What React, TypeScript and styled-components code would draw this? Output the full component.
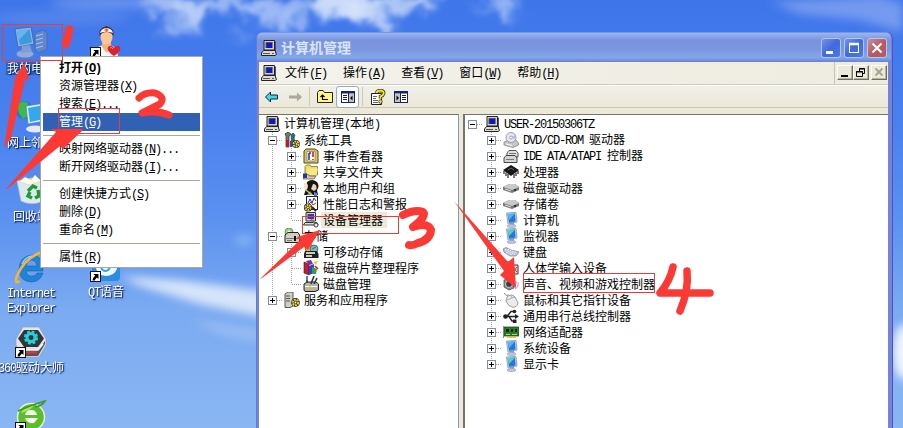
import React from "react";
import styled, { createGlobalStyle, css } from "styled-components";

const GlobalStyle = createGlobalStyle`
  * { box-sizing: border-box; }
  body { margin: 0; overflow: hidden; }
`;

const Desktop = styled.main`
  position: relative;
  width: 903px;
  height: 428px;
  overflow: hidden;
  background: linear-gradient(#3e76ea 0%, #4a80ee 28%, #5a90f0 50%, #7aaaf1 72%, #8ab6f3 100%);
  font-family: "Noto Sans CJK SC", sans-serif;
  font-size: 12px;
  line-height: 16px;
  color: #000;
`;

const SkyLayer = styled.svg`
  position: absolute;
  inset: 0;
`;

const Latin = styled.span`
  font-family: "Liberation Mono", monospace;
  font-size: 12px;
  letter-spacing: -1.2px;
  white-space: pre;
`;

const Key = styled.span`
  text-decoration: underline;
  text-decoration-thickness: 1px;
  text-underline-offset: 1px;
`;

/* Sets Latin runs in a half-width face; "&" marks the access key. */
function Label({ text }: { text: string }) {
  const runs = text.match(/[\x0a\x20-\x7e]+|[^\x0a\x20-\x7e]+/g) ?? [];
  return (
    <>
      {runs.map((run, i) => {
        if (!/^[\x20-\x7e]/.test(run)) return <React.Fragment key={i}>{run}</React.Fragment>;
        const at = run.indexOf("&");
        if (at < 0) return <Latin key={i}>{run}</Latin>;
        return (
          <Latin key={i}>
            {run.slice(0, at)}
            <Key>{run[at + 1]}</Key>
            {run.slice(at + 2)}
          </Latin>
        );
      })}
    </>
  );
}

/* ---------- desktop shortcuts ---------- */

const Shortcut = styled.div<{ $x: number; $y: number; $w?: number }>`
  position: absolute;
  left: ${(p) => p.$x}px;
  top: ${(p) => p.$y}px;
  width: ${(p) => p.$w ?? 76}px;
  display: flex;
  flex-direction: column;
  align-items: center;
  gap: 3px;
`;

const Caption = styled.div<{ $selected?: boolean }>`
  color: #fff;
  line-height: 12.5px;
  padding: 0 1px;
  text-align: center;
  white-space: pre;
  text-shadow: 1px 1px 1px rgba(10, 30, 80, 0.9), 1px 1px 2px rgba(10, 30, 80, 0.6);
  ${(p) => p.$selected && css`background: #2f62b8;`}
`;

const Big = styled.svg.attrs({ viewBox: "0 0 32 32", width: 32, height: 32 })`
  display: block;
  overflow: visible;
`;

const ArrowBadge = () => (
  <g>
    <rect x="0.5" y="21.5" width="10" height="10" fill="#fff" stroke="#111" />
    <path d="M3.5 24H8.5V29L6.9 27.4Q5.2 28.6 4.8 30.5H2.5Q2.6 27.4 5.2 25.7Z" fill="#000" />
  </g>
);

const ComputerBig = () => (
  <Big>
    <path d="M20 6L28 3L32 6V22L24 26L20 23Z" fill="#5f88cc" stroke="#4267b0" strokeWidth=".7" />
    <path d="M21 9L28 7M21 13L28 11M21 17L28 15M21 21L28 19" stroke="#a5c0ea" strokeWidth="1.3" />
    <path d="M0 2L16 0L19 17L3 20Z" fill="#8fb4e6" stroke="#3862a8" strokeWidth=".8" />
    <path d="M2 4L14.500 2L17 15.500L5 18Z" fill="#3d9ade" />
    <path d="M2 4L14.500 2L4 13Z" fill="#66b6ea" />
    <ellipse cx="10" cy="27" rx="9" ry="4" fill="#8fabdc" stroke="#5b7ab5" strokeWidth=".8" />
    <path d="M7 19L15 18L17 25L6 26Z" fill="#7f9dd4" />
  </Big>
);
const DoctorBig = () => (
  <Big>
    <path d="M5 32Q4 20 14 19H19Q28 20 28 32Z" fill="#f3f6fb" />
    <path d="M12 16H21V21L16.500 27L12 21Z" fill="#f5b47e" />
    <ellipse cx="16.500" cy="11" rx="6" ry="7.500" fill="#fbc794" />
    <path d="M9.500 10Q8 2 16.500 0Q25 2 23.500 10Q21 6 16.500 6Q12 6 9.500 10Z" fill="#3a3438" />
    <path d="M10 7Q11 2.500 16.500 2Q22 2.500 23 7Q16.500 4.500 10 7Z" fill="#fff" />
    <path d="M14.500 4H18.500M16.500 2.300V6" stroke="#e85b35" strokeWidth="1.5" />
    <path d="M24 30Q16 25 18 21Q21 18 24 22Q27 18 30 21Q32 25 24 30Z" fill="#e0202c" />
    <path d="M20 22Q21.500 20.500 23 23" stroke="#ff8a80" fill="none" />
    <ArrowBadge />
  </Big>
);
const NetworkBig = () => (
  <Big>
    <circle cx="9" cy="9" r="9" fill="#2c72d8" />
    <path d="M2 4Q8 -2 13 2L11 8L15 14L8 18L4 12Z" fill="#3fb94a" />
    <path d="M11 5L30 2V20L13 23Z" fill="#d8ebfb" stroke="#4c7ec0" strokeWidth=".7" />
    <path d="M13 7L29 4V18L15 21Z" fill="#35a8ec" />
    <ellipse cx="20" cy="28" rx="9" ry="3.500" fill="#e4e9f2" />
  </Big>
);
const RecycleBig = () => (
  <Big>
    <path d="M2 6L16 3L30 5L26 27Q16 31 6 26Z" fill="#dde9f2" stroke="#a9bccc" strokeWidth=".7" />
    <path d="M4 7L10 2L16 5L20 0L26 6L15 10Z" fill="#fffdf0" stroke="#d8c67e" strokeWidth=".5" />
    <path d="M13 16L18 11L22 13M23 15L24 21L20 23M17 23L13 21L15 17" fill="none" stroke="#1e9c2e" strokeWidth="3.4" />
  </Big>
);
const ExplorerBig = () => (
  <Big>
    <path
      fillRule="evenodd"
      d="M28 20H11Q12 26 18 25Q21 25 22 22H28Q25 31 16 31Q4 30 4 18Q5 5 17 4Q29 5 28 20ZM11 15H22Q21 9 16.500 9Q12 10 11 15Z"
      fill="#1f83d6"
      stroke="#1561b0"
      strokeWidth=".6"
    />
    <path d="M5 30Q-1 34 2 25Q8 10 22 3Q32 -2 29 7" fill="none" stroke="#f4b43a" strokeWidth="2.600" />
    <path d="M7 13Q10 6 17 5" stroke="#8fd1fb" strokeWidth="1.500" fill="none" />
  </Big>
);
const QtBig = () => (
  <Big>
    <rect x="2" y="2" width="28" height="29" rx="4" fill="#2a8de0" />
    <path d="M6 9H27V19Q24 26 16 26Q7 25 6 18Z" fill="#eef8ff" />
    <path d="M11 17Q12 21 16 21Q20 20 20 15" stroke="#39a2ea" strokeWidth="2" fill="none" />
    <ArrowBadge />
  </Big>
);
const DriverBig = () => (
  <Big>
    <path d="M8 1H24L31 13V19L24 31H8L1 19V13Z" fill="#e2e4e7" stroke="#9aa0a8" strokeWidth=".7" />
    <path d="M8 24H24L30 15V18L23 30H9L4 21Z" fill="#50545a" />
    <path d="M10 26.500H22" stroke="#d8343c" strokeWidth="2.500" />
    <path d="M5 21L9 24H23L28 18" stroke="#f2f2f2" strokeWidth="1.500" fill="none" />
    <path d="M9 4H23L29 12.500L23 21H9L3 12.500Z" fill="#31363c" />
    <circle cx="16" cy="11.500" r="5.600" fill="none" stroke="#22d2d8" strokeWidth="3" strokeDasharray="2.600 1.800" />
    <circle cx="16" cy="11.500" r="4" fill="none" stroke="#22d2d8" strokeWidth="3" />
    <ArrowBadge />
  </Big>
);
const GreenBig = () => (
  <Big>
    <circle cx="16" cy="16" r="13.500" fill="#5cbe2c" stroke="#e5f8d4" strokeWidth="1.400" />
    <path d="M6 12Q10 4 19 4Q15 10 6 12Z" fill="#a9e36b" />
    <path d="M10 14Q11 9 16 9Q21 9 22 14ZM10 17H23L19 22Q12 23 10 17Z" fill="#f5ffea" />
    <path d="M3 10Q16 4 30 0Q27 5 20 6" fill="none" stroke="#3c9a1c" strokeWidth="1.600" />
    <ArrowBadge />
  </Big>
);

/* ---------- context menu ---------- */

const ContextMenu = styled.div`
  position: absolute;
  left: 40px;
  top: 56px;
  width: 163px;
  height: 212px;
  padding: 2px;
  border: 1px solid #aca899;
  background: #fff;
  display: flex;
  flex-direction: column;
`;
const MenuItem = styled.div<{ $active?: boolean; $bold?: boolean }>`
  height: 18px;
  line-height: 16px;
  padding-left: 16px;
  white-space: nowrap;
  flex: none;
  font-weight: ${(p) => (p.$bold ? 700 : 400)};
  ${(p) => p.$active && css`background: #3161b5; color: #fff;`}
`;
const MenuRule = styled.hr`
  flex: none;
  width: 157px;
  height: 1px;
  margin: 4px 0;
  border: 0;
  background: #aca899;
`;

/* ---------- window ---------- */

const Window = styled.section`
  position: absolute;
  left: 256px;
  top: 32px;
  width: 637px;
  height: 410px;
  display: flex;
  flex-direction: column;
  padding: 0 5px 0 3px;
  border-radius: 7px 7px 0 0;
  background: #7583d8;
  box-shadow: inset 1px 1px 0 #6b78d0, inset -1px 0 0 #4a52c4;
`;
const TitleBar = styled.header`
  height: 30px;
  flex: none;
  margin: 0 -3px 0 -2px;
  padding: 2px 4px 0 4px;
  border-radius: 6px 6px 0 0;
  display: flex;
  align-items: center;
  gap: 4px;
  background: linear-gradient(#7182d6 0, #97b4ee 5%, #8ba6e8 14%, #7a93df 28%, #7c96e0 58%, #82a8ea 84%, #7698e2 92%, #6d7dd0 100%);
`;
const Title = styled.h1`
  margin: 0;
  padding-bottom: 2px;
  flex: 1;
  font-size: 14px;
  line-height: 18px;
  font-weight: 700;
  color: #d8e4fb;
`;
const Caps = styled.div`
  display: flex;
  gap: 3px;
`;
const CapButton = styled.button<{ $close?: boolean }>`
  width: 20px;
  height: 20px;
  padding: 0;
  border: 1px solid #b3c7f4;
  border-radius: 3px;
  background: ${(p) =>
    p.$close ? "linear-gradient(135deg, #c88a9c, #b8585e 55%, #b05f68)" : "linear-gradient(135deg, #7292e8, #4169dc 50%, #4a7ce8)"};
  svg { display: block; }
`;
const MenuBar = styled.nav`
  height: 23px;
  flex: none;
  display: flex;
  align-items: stretch;
  border-bottom: 1px solid #d0ccba;
  background: linear-gradient(90deg, #f3f2ec, #eeecdf);
`;
const MenuList = styled.div`
  flex: 1;
  display: flex;
  align-items: center;
  gap: 16px;
  padding-left: 2px;
  white-space: nowrap;
`;
const MenuIcon = styled.span`
  display: flex;
  margin-right: -8px;
`;
const ChildButtons = styled.div`
  display: flex;
  width: 54px;
  padding: 3px 0 5px 2px;
  border-left: 1px solid #c9c5b2;
`;
const ChildButton = styled.button<{ $gap?: boolean }>`
  width: 16px;
  height: 15px;
  padding: 0;
  margin-left: ${(p) => (p.$gap ? 2 : 0)}px;
  border: 1px solid;
  border-color: #fff #716f64 #716f64 #fff;
  box-shadow: inset -1px -1px 0 #b7b39f;
  background: #ece9d8;
  svg { display: block; }
`;
const ToolBar = styled.div`
  height: 23px;
  flex: none;
  display: flex;
  align-items: center;
  padding-left: 2px;
  border-top: 1px solid #fff;
  border-bottom: 1px solid #cbc7b4;
  background: linear-gradient(#f1f0e8, #ebe8d9);
`;
const ToolSlot = styled.span<{ $w: number; $on?: boolean }>`
  width: ${(p) => p.$w}px;
  height: 22px;
  flex: none;
  display: flex;
  align-items: center;
  justify-content: center;
  ${(p) => p.$on && css`background: #fff; border: 1px solid #98a8c8; border-radius: 3px;`}
`;
const ToolRule = styled.i<{ $tight?: boolean }>`
  width: 1px;
  height: 19px;
  margin: 0 ${(p) => (p.$tight ? 3 : 4)}px;
  background: #cdc9b6;
`;
const Panes = styled.div`
  flex: 1;
  display: flex;
  gap: 4px;
  padding-top: 6px;
  background: #ece9d8;
`;
const Pane = styled.div<{ $w?: number }>`
  ${(p) => (p.$w ? css`width: ${p.$w}px; flex: none; border-right: 1px solid #7f9db9;` : css`flex: 1; border-left: 2px solid #77756a;`)}
  border-top: 1px solid #77756a;
  padding-top: 1px;
  background: #fff;
`;
const Row = styled.div<{ $shift?: number }>`
  display: flex;
  align-items: center;
  height: 16px;
  margin-left: ${(p) => p.$shift ?? 0}px;
  white-space: nowrap;
`;
const Cell = styled.svg.attrs({ width: 19, height: 16, viewBox: "0 0 19 16" })`
  flex: none;
`;
const Glyph = styled.svg.attrs({ width: 16, height: 16, viewBox: "0 0 16 16" })`
  flex: none;
  display: block;
`;
const Node = styled.span<{ $pad: number }>`
  display: flex;
  padding-left: ${(p) => p.$pad}px;
`;
const RowText = styled.span<{ $selected?: boolean }>`
  margin-left: 4px;
  ${(p) => p.$selected && css`background: #ece9d8; margin-left: 2px; padding: 0 4px 0 2px;`}
`;

type Guide = "plus" | "minus" | "tee" | "elbow" | "pipe" | "none";

/* One column of tree guides: dotted lines plus an optional expander box. */
function GuideCell({ kind, last, first }: { kind: Guide; last?: boolean; first?: boolean }) {
  if (kind === "none") return <Cell />;
  const box = kind === "plus" || kind === "minus";
  const bottom = kind === "elbow" || last ? 8 : 16;
  return (
    <Cell>
      <path d={`M9.500 ${first ? 8 : 0}V${bottom}`} stroke="#a5a394" strokeDasharray="1 1" />
      {kind !== "pipe" && <path d="M10 8.500H19" stroke="#a5a394" strokeDasharray="1 1" />}
      {box && (
        <>
          <rect x="5.500" y="4.500" width="8" height="8" fill="#fbfbf8" stroke="#848da0" />
          <path d={kind === "plus" ? "M7 8.500H12M9.500 6V11" : "M7 8.500H12"} stroke="#000" />
        </>
      )}
    </Cell>
  );
}

/* ---------- 16px glyphs ---------- */

const Pc = () => (
  <Glyph>
    <path d="M3 .5H13.500V10H3Z" fill="#d6d3c6" stroke="#222" />
    <path d="M13.500 1L14.500 2V10L13 11" fill="none" stroke="#555" />
    <rect x="5" y="2.500" width="6.500" height="5.500" fill="#0a18c8" />
    <path d="M5 8V2.500H11.500" stroke="#55534c" fill="none" />
    <path d="M2.500 10.500H14.500V12L15.500 14.500L14 15.500H.5V13Z" fill="#dedbd0" stroke="#222" />
    <path d="M2 13.500H9M11 13.500H13" stroke="#555" />
  </Glyph>
);
const Tools = () => (
  <Glyph>
    <path d="M1 2L4 0L7 2L5 4V15H2V4Z" fill="#777" stroke="#222" strokeWidth=".7" />
    <path d="M2 8H5V15H2Z" fill="#c61b1b" />
    <path d="M7 3L9 1L11 3L10 6L12 14H8Z" fill="#1f7d7a" stroke="#123" strokeWidth=".6" />
    <path d="M6 9L8 8V15H6Z" fill="#3848c4" />
    <circle cx="12" cy="12" r="2.500" fill="none" stroke="#222" strokeWidth="2.800" />
    <circle cx="12" cy="12" r="2.500" fill="none" stroke="#eed42c" strokeWidth="2" strokeDasharray="1.800 .7" />
  </Glyph>
);
const EventLog = () => (
  <Glyph>
    <path d="M1 3L3 1H12L15 3V15H1Z" fill="#dcc854" stroke="#4f491a" />
    <path d="M4 3.500H12V13H4Z" fill="#fff" stroke="#777" strokeWidth=".7" />
    <path d="M6 5V12M6 5H8" stroke="#2030c0" strokeWidth="1.500" />
    <path d="M10 4V9M10 11V12" stroke="#cf2020" strokeWidth="1.600" />
  </Glyph>
);
const SharedFolder = () => (
  <Glyph>
    <path d="M2 2.500L3.500 1H7L8 2.500H14.500V11H2Z" fill="#f0dc6a" stroke="#7d6b1a" strokeWidth=".8" />
    <path d="M2.500 11L5 4.500H15L13.500 11Z" fill="#f8e882" />
    <path d="M0 11L4 10L7 12L13 12L11 15H5L0 15Z" fill="#e2c39b" stroke="#333" strokeWidth=".6" />
    <path d="M0 9.500H4V14H0Z" fill="#1c38a8" />
  </Glyph>
);
const Users = () => (
  <Glyph>
    <path d="M4 2Q9 -2 14 2Q17 6 14 10L15 15H1L3 9Z" fill="#161616" />
    <path d="M10 4Q14 4 13.500 9L11 11L8 9Z" fill="#f3d4b0" />
    <path d="M1 3Q4 2 5 6L4 10L1 8Z" fill="#f6e2c8" />
    <path d="M7 11L10 15H4ZM11 12L14 13V16H11Z" fill="#5a84dc" />
    <path d="M3 10L9 15" stroke="#e8d030" strokeWidth="1.300" />
  </Glyph>
);
const Perf = () => (
  <Glyph>
    <rect x="3.500" y=".5" width="11" height="13" fill="#fff" stroke="#222" />
    <path d="M5 7L7 3L9 7L11 2L13 5" stroke="#2233bb" fill="none" />
    <path d="M5 9L8 6L10 9L13 7" stroke="#cc2222" fill="none" />
    <circle cx="5" cy="11.500" r="2.500" fill="none" stroke="#222" strokeWidth="3.200" />
    <circle cx="5" cy="11.500" r="2.500" fill="none" stroke="#ecd030" strokeWidth="2" strokeDasharray="1.800 .7" />
    <path d="M9 11L13 15" stroke="#222" strokeWidth="2" />
  </Glyph>
);
const DevMgr = () => (
  <Glyph>
    <path d="M3 .5H12.500V9H3Z" fill="#d6d3c6" stroke="#333" />
    <rect x="4.500" y="2" width="6.500" height="5" fill="#3a35b8" />
    <path d="M2 10.500H14L15 13H.5Z" fill="#dedbd0" stroke="#333" />
    <path d="M8 7L13 13" stroke="#777" strokeWidth="1.500" />
    <circle cx="13" cy="13" r="2" fill="#eee" stroke="#444" />
  </Glyph>
);
const Storage = () => (
  <Glyph>
    <circle cx="5" cy="4" r="4" fill="#a9d37c" stroke="#4c7837" strokeWidth=".7" />
    <circle cx="5" cy="4" r="1.300" fill="#fff" />
    <path d="M1 7L4 4.500H14L15.500 7V14.500H1Z" fill="#d0cdc2" stroke="#222" />
    <path d="M1 10.500H15M3 12.500H8" stroke="#777" />
    <path d="M11 8V13" stroke="#111" strokeWidth="2" />
  </Glyph>
);
const Removable = () => (
  <Glyph>
    <circle cx="6" cy="4" r="4" fill="#d9c83f" stroke="#333" strokeWidth=".6" />
    <circle cx="11" cy="5" r="4" fill="#5cc6c0" stroke="#333" strokeWidth=".6" />
    <path d="M2 7H14L15.500 10V14H1V10Z" fill="#222" />
    <path d="M3 9H12M3 12H9" stroke="#fff" strokeWidth="1.300" />
    <path d="M9 5L13 3" stroke="#d33" />
  </Glyph>
);
const Defrag = () => (
  <Glyph>
    <path d="M1 2L6 4V15L1 13Z" fill="#c21d32" stroke="#411" strokeWidth=".6" />
    <path d="M6 6L11 4V13L6 15Z" fill="#3242c8" />
    <path d="M3 1L8 0L10 4L6 5Z" fill="#7e2ba4" />
    <path d="M9 7L14 9L13 14L9 14Z" fill="#2aa44a" />
    <path d="M10 2L15 1L13 5Z" fill="#e8cf2c" />
    <path d="M12 6L15 9" stroke="#d12" strokeWidth="1.500" />
  </Glyph>
);
const DiskMgmt = () => (
  <Glyph>
    <path d="M1 8L4 6H13L15.500 8V14L12 15.500H2L1 14Z" fill="#b5b3ac" stroke="#222" />
    <path d="M2 10.500H14" stroke="#fff" />
    <path d="M4 0V7M11 0L8 8M14 2L11 8" stroke="#333" strokeWidth="1.600" />
    <path d="M4 0V4" stroke="#3c9aa8" strokeWidth="2" />
    <path d="M4 13L7 11L9 13" stroke="#d8c12c" strokeWidth="1.500" fill="none" />
  </Glyph>
);
const Services = () => (
  <Glyph>
    <path d="M1 2L4 0H9V14L6 15.500H1Z" fill="#d0cdc2" stroke="#333" strokeWidth=".8" />
    <path d="M2 4H6M2 6.500H6M2 9H6" stroke="#555" />
    <circle cx="11.500" cy="10.500" r="2.700" fill="none" stroke="#222" strokeWidth="3.400" />
    <circle cx="11.500" cy="10.500" r="2.700" fill="none" stroke="#eed42c" strokeWidth="2.200" strokeDasharray="1.900 .8" />
  </Glyph>
);
const Disc = () => (
  <Glyph>
    <path d="M1 10L6 8H13L15.500 11V13L10 15.500L1 13Z" fill="#c5c6ca" stroke="#777" strokeWidth=".7" />
    <circle cx="8" cy="5.500" r="5" fill="#e5e6f2" stroke="#8889a0" strokeWidth=".8" />
    <path d="M8 5.500L12 3V7Z" fill="#b7bbea" />
    <circle cx="8" cy="5.500" r="1.400" fill="#fff" stroke="#888" strokeWidth=".7" />
    <path d="M3 12L9 13.500" stroke="#fff" />
  </Glyph>
);
const Ide = () => (
  <Glyph>
    <path d="M4 5L6 2.500H13L15 5V9H4Z" fill="#e0e0de" stroke="#444" strokeWidth=".9" />
    <path d="M1 10L3 7.500H12L14 10V14.500H1Z" fill="#d4d4d2" stroke="#333" strokeWidth=".9" />
    <path d="M3 11.500H11M6 5.500H13" stroke="#777" />
  </Glyph>
);
const Chip = () => (
  <Glyph>
    <path d="M0 6L8 1L16 6L8 12Z" fill="#161616" />
    <path d="M1 7V10M3 8.500V12M5 10V14M11 10V14M13 8.500V12M15 7V10" stroke="#222" strokeWidth="1.200" />
    <path d="M5 6L8 4L11 6" stroke="#666" fill="none" />
  </Glyph>
);
const Drive = () => (
  <Glyph>
    <path d="M0 7L6 4H12L16 7V10L9 13L0 10Z" fill="#77787a" />
    <path d="M0 7L6 4H12L16 7L9 10Z" fill="#c9cacb" />
    <path d="M2 9L8 11" stroke="#ddd" />
    <circle cx="12" cy="10" r="1" fill="#222" />
  </Glyph>
);
const Monitor = ({ alt = "#54b5ee" }: { alt?: string }) => (
  <Glyph>
    <path d="M3.500 1L13 .5L14 10L5 12Z" fill="#cfe2f6" stroke="#6888b8" strokeWidth=".7" />
    <path d="M4.500 2L12 1.500L12.700 9.500L6 11Z" fill="#2477dc" />
    <path d="M4.500 2L12 1.500L6 8Z" fill={alt} />
    <path d="M7 11L11 10V13H7Z" fill="#8899b8" />
    <ellipse cx="8.500" cy="14" rx="4.500" ry="1.700" fill="#bcc4d4" stroke="#8f9ab4" strokeWidth=".5" />
  </Glyph>
);
const Keyboard = () => (
  <Glyph>
    <path d="M0 5L3 3.500L8 6L16 8L13 12L7 12L1 8Z" fill="#b9bedd" stroke="#777c9c" strokeWidth=".7" />
    <path d="M2 5.500L12 10.500M5 5.500L14 9M3 8L9 11" stroke="#fff" strokeDasharray="1.200 .8" />
  </Glyph>
);
const Hid = () => (
  <Glyph>
    <path d="M2 2H6V7L9 10H2Z" fill="#eee" stroke="#222" />
    <path d="M8 5H15V14H8Z" fill="#e2e0dc" stroke="#333" />
    <path d="M10 7L14 12M14 7L10 12" stroke="#a33" />
  </Glyph>
);
const Sound = () => (
  <Glyph>
    <path d="M1 4L6 2L11 4V12L6 14L1 11Z" fill="#8c8c90" stroke="#444" strokeWidth=".7" />
    <circle cx="6" cy="8" r="3.500" fill="#3a3a42" stroke="#ccc" />
    <path d="M11 10Q14 9 13 5M12 13Q16 11 15 6" stroke="#b88be0" fill="none" />
  </Glyph>
);
const Mouse = () => (
  <Glyph>
    <path d="M1 1Q3 5 6 3" stroke="#888" fill="none" />
    <path d="M4 5Q8 1 12 5L15 11Q14 16 9 15Q5 14 3 9Z" fill="#ececec" stroke="#888" strokeWidth=".8" />
    <path d="M4 8L9 6L12 5M9 6L8 3.500" stroke="#999" fill="none" strokeWidth=".7" />
  </Glyph>
);
const Usb = () => (
  <Glyph>
    <path d="M2 8.500H13M4 8.500L8 3.500H11M6 8.500L9 13H12" stroke="#222" fill="none" strokeWidth="1.400" />
    <circle cx="2.500" cy="8.500" r="2.300" fill="#222" />
    <path d="M12 6L16 8.500L12 11Z" fill="#222" />
    <circle cx="11.500" cy="3.500" r="1.800" fill="#222" />
    <rect x="10" y="11.500" width="3.500" height="3.500" fill="#222" />
  </Glyph>
);
const Nic = () => (
  <Glyph>
    <path d="M1 3H16V12H1Z" fill="#2c7d2a" stroke="#153f14" strokeWidth=".7" />
    <path d="M.5 2V14" stroke="#888" />
    <path d="M3 5H6V8H3ZM8 5H10V8H8ZM12 5H14V8H12Z" fill="#0d270d" />
    <path d="M3 10.500H7M9 10.500H14" stroke="#a9dd6a" />
    <path d="M4 13H13" stroke="#d5b73a" strokeWidth="1.500" />
  </Glyph>
);
const BackArrow = ({ off }: { off?: boolean }) => (
  <Glyph>
    <path
      d={off ? "M15 8L10 3.500V6.500H2V9.500H10V12.500Z" : "M1.500 8L6.500 3V6H13.500V10H6.500V13Z"}
      fill={off ? "#aaa89c" : "#35e0e6"}
      stroke={off ? "none" : "#102050"}
    />
  </Glyph>
);
const UpFolder = () => (
  <Glyph>
    <path d="M.5 3.500L2 1.500H6L7.500 3.500H15.500V13.500H.5Z" fill="#fdf48c" stroke="#222" />
    <path d="M5.500 6V10.500H11M3.500 8L5.500 6L7.500 8" fill="none" stroke="#000" strokeWidth="1.200" />
  </Glyph>
);
const PaneGlyph = ({ flip }: { flip?: boolean }) => (
  <Glyph>
    <g transform={flip ? "translate(16 0) scale(-1 1)" : undefined}>
      <rect x="1.500" y="2.500" width="13" height="11" fill="#fff" stroke="#1a2270" />
      <path d="M1 3.500H15" stroke="#1a2270" strokeWidth="2" />
      <rect x="8" y="5" width="6" height="8" fill="#c9c6bb" />
      <path d="M8.500 4V13" stroke="#1a2270" />
      <path d="M3 6.500H7M3 8.500H7M3 10.500H7" stroke="#222" />
      <path d="M12.500 6.500V11.500L10 9Z" fill="#000" />
    </g>
  </Glyph>
);
const HelpGlyph = () => (
  <Glyph>
    <path d="M1.500 4.500H11.500V15.500H1.500Z" fill="#fff" stroke="#222" />
    <path d="M3 7.500H7M3 9.500H6M3 11.500H8M3 13.500H8" stroke="#666" />
    <path d="M6.500 4Q7 1.500 10.500 1.500Q14.500 2 13.500 5Q13 6.500 10.500 7.500V9.500" fill="none" stroke="#222" strokeWidth="3.400" />
    <path d="M6.500 4Q7 1.500 10.500 1.500Q14.500 2 13.500 5Q13 6.500 10.500 7.500V9.500" fill="none" stroke="#f4e72a" strokeWidth="2" />
    <circle cx="10.500" cy="12.500" r="1.800" fill="#f4e72a" stroke="#222" strokeWidth=".7" />
  </Glyph>
);

/* ---------- data ---------- */

type Item = { text: string; icon: React.ReactNode; guides: Guide[]; last?: boolean; first?: boolean; pad?: number; selected?: boolean };

const consoleTree: Item[] = [
  { text: "计算机管理(本地)", icon: <Pc />, guides: [], pad: 5 },
  { text: "系统工具", icon: <Tools />, guides: ["minus"] },
  { text: "事件查看器", icon: <EventLog />, guides: ["pipe", "plus"] },
  { text: "共享文件夹", icon: <SharedFolder />, guides: ["pipe", "plus"] },
  { text: "本地用户和组", icon: <Users />, guides: ["pipe", "plus"] },
  { text: "性能日志和警报", icon: <Perf />, guides: ["pipe", "plus"] },
  { text: "设备管理器", icon: <DevMgr />, guides: ["pipe", "elbow"], selected: true },
  { text: "存储", icon: <Storage />, guides: ["minus"] },
  { text: "可移动存储", icon: <Removable />, guides: ["pipe", "plus"] },
  { text: "磁盘碎片整理程序", icon: <Defrag />, guides: ["pipe", "tee"] },
  { text: "磁盘管理", icon: <DiskMgmt />, guides: ["pipe", "elbow"] },
  { text: "服务和应用程序", icon: <Services />, guides: ["plus"], last: true },
];

const deviceTree: Item[] = [
  { text: "USER-20150306TZ", icon: <Pc />, guides: ["minus"], first: true, last: true },
  { text: "DVD/CD-ROM 驱动器", icon: <Disc />, guides: ["none", "plus"] },
  { text: "IDE ATA/ATAPI 控制器", icon: <Ide />, guides: ["none", "plus"] },
  { text: "处理器", icon: <Chip />, guides: ["none", "plus"] },
  { text: "磁盘驱动器", icon: <Drive />, guides: ["none", "plus"] },
  { text: "存储卷", icon: <Drive />, guides: ["none", "plus"] },
  { text: "计算机", icon: <Monitor />, guides: ["none", "plus"] },
  { text: "监视器", icon: <Monitor alt="#5fd0b8" />, guides: ["none", "plus"] },
  { text: "键盘", icon: <Keyboard />, guides: ["none", "plus"] },
  { text: "人体学输入设备", icon: <Hid />, guides: ["none", "plus"] },
  { text: "声音、视频和游戏控制器", icon: <Sound />, guides: ["none", "plus"] },
  { text: "鼠标和其它指针设备", icon: <Mouse />, guides: ["none", "plus"] },
  { text: "通用串行总线控制器", icon: <Usb />, guides: ["none", "plus"] },
  { text: "网络适配器", icon: <Nic />, guides: ["none", "plus"] },
  { text: "系统设备", icon: <Monitor />, guides: ["none", "plus"] },
  { text: "显示卡", icon: <Monitor alt="#5fd0b8" />, guides: ["none", "plus"], last: true },
];

function Tree({ items, indent, shift }: { items: Item[]; indent: number; shift?: number }) {
  return (
    <>
      {items.map((item) => (
        <Row key={item.text} $shift={shift}>
          <Node $pad={item.guides.length ? indent : item.pad ?? 0}>
            {item.guides.map((g, i) => (
              <GuideCell key={i} kind={g} last={item.last && i === item.guides.length - 1} first={item.first} />
            ))}
          </Node>
          <Node $pad={item.guides.length ? 2 : 0}>{item.icon}</Node>
          <RowText $selected={item.selected}>
            <Label text={item.text} />
          </RowText>
        </Row>
      ))}
    </>
  );
}

const contextItems: (string | null)[] = [
  "打开(&O)", "资源管理器(&X)", "搜索(&E)...", "管理(&G)", null,
  "映射网络驱动器(&N)...", "断开网络驱动器(&I)...", null,
  "创建快捷方式(&S)", "删除(&D)", "重命名(&M)", null, "属性(&R)",
];

/* Cloud puffs as [cx, cy, rx, ry, opacity]. */
const puffs = [
  [165, 2, 24, 9, 0.6], [190, 12, 18, 10, 0.7], [172, 28, 13, 6, 0.55], [196, 24, 9, 8, 0.5],
  [225, 4, 26, 7, 0.6], [262, 10, 20, 9, 0.6], [288, 22, 14, 10, 0.6], [296, 6, 16, 9, 0.5],
  [240, 34, 10, 3, 0.35], [345, 2, 34, 12, 0.85], [362, 14, 22, 9, 0.8], [384, 24, 9, 8, 0.7],
  [400, 4, 26, 9, 0.7], [426, 2, 14, 7, 0.6], [326, 12, 14, 6, 0.6], [502, 3, 16, 9, 0.5], [508, 13, 9, 5, 0.4],
  [480, 8, 6, 4, 0.25],
];

const Sky = () => (
  <SkyLayer width="903" height="428" viewBox="0 0 903 428">
    <defs>
      <filter id="puff" filterUnits="userSpaceOnUse" x="0" y="-60" width="903" height="200">
        <feGaussianBlur in="SourceGraphic" stdDeviation="4" result="b" />
        <feTurbulence type="fractalNoise" baseFrequency=".05" numOctaves="3" seed="7" result="n" />
        <feDisplacementMap in="b" in2="n" scale="28" xChannelSelector="R" yChannelSelector="G" />
        <feGaussianBlur stdDeviation="1.400" />
      </filter>
      <filter id="soft" filterUnits="userSpaceOnUse" x="-60" y="-60" width="1020" height="560">
        <feGaussianBlur stdDeviation="5" />
      </filter>
    </defs>
    <g fill="#e3ebfb" filter="url(#puff)">
      {puffs.map(([cx, cy, rx, ry, o], i) => (
        <ellipse key={i} cx={cx} cy={cy} rx={rx} ry={ry} opacity={o} />
      ))}
    </g>
    <g fill="#a9bdf5" filter="url(#soft)">
      <path d="M770 2L880 -4L903 4V32L860 20L800 14Z" opacity=".5" />
      <ellipse cx="60" cy="18" rx="70" ry="7" opacity=".2" />
      <ellipse cx="110" cy="3" rx="60" ry="6" opacity=".4" />
    </g>
    <g filter="url(#soft)">
      <path d="M120 276L180 280L270 292V318L200 304L140 286Z" fill="#e8f0fb" opacity=".85" />
      <path d="M190 320L262 330V342L220 334Z" fill="#c3d6f8" opacity=".4" />
      <ellipse cx="244" cy="240" rx="10" ry="4" fill="#a5d0f8" opacity=".6" />
      <ellipse cx="904" cy="352" rx="11" ry="28" fill="#f2f6fc" />
    </g>
  </SkyLayer>
);

const MarkLayer = styled.svg`
  position: absolute;
  inset: 0;
  pointer-events: none;
`;

/* Hand-drawn step marks: frames, arrows and the numerals 1 to 4. */
const Marks = () => (
  <MarkLayer width="903" height="428" viewBox="0 0 903 428">
    <g fill="none" stroke="#ef3a3c">
      <rect x="2.500" y="24.500" width="60" height="36" />
      <rect x="58.500" y="108.500" width="61" height="25" />
      <rect x="302.500" y="216.500" width="96" height="17" />
      <rect x="523.500" y="273.500" width="131" height="19" />
    </g>
    <g fill="#fb3a36">
      <path d="M4 148L15 78L15.500 77L24 63L29 79L25 80L11 138Z" />
      <path d="M6 189L56 132L51 129L84 129L63 149L60 146L7 189Z" />
      <path d="M260 279L300 240L297 237L320 230L308 250L304 247L262 278Z" />
      <path d="M454 201L508 262L514 257L516 288L500 275L504 271Z" />
    </g>
    <g fill="none" stroke="#fb3a36" strokeLinecap="round" strokeLinejoin="round">
      <path d="M69.500 29Q69 36 66 44" strokeWidth="7.500" />
      <path d="M139 98Q145 92 155 93Q166 97 160 104L142 113Q157 110 169 115" strokeWidth="7" />
      <path d="M403 215Q415 209 423 212Q427 216 413 227Q428 222 431 230Q430 240 418 243Q412 246 409 245" strokeWidth="8" />
      <path d="M673 267Q670 281 660 293H710M687 271Q689 290 680 311" strokeWidth="7.500" />
    </g>
  </MarkLayer>
);

export default function App() {
  return (
    <Desktop>
      <GlobalStyle />
      <Sky />

      <Shortcut $x={-7} $y={27}>
        <ComputerBig />
        <Caption $selected>我的电脑</Caption>
      </Shortcut>
      <Shortcut $x={68} $y={26}>
        <DoctorBig />
      </Shortcut>
      <Shortcut $x={-7} $y={101}>
        <NetworkBig />
        <Caption>网上邻居</Caption>
      </Shortcut>
      <Shortcut $x={-7} $y={175}>
        <RecycleBig />
        <Caption>回收站</Caption>
      </Shortcut>
      <Shortcut $x={-7} $y={251}>
        <ExplorerBig />
        <Caption><Label text={"Internet\nExplorer"} /></Caption>
      </Shortcut>
      <Shortcut $x={68} $y={250}>
        <QtBig />
        <Caption><Label text="QT语音" /></Caption>
      </Shortcut>
      <Shortcut $x={-7} $y={326}>
        <DriverBig />
        <Caption><Label text="360驱动大师" /></Caption>
      </Shortcut>
      <Shortcut $x={-7} $y={401}>
        <GreenBig />
      </Shortcut>

      <Window>
        <TitleBar>
          <Pc />
          <Title>计算机管理</Title>
          <Caps>
            <CapButton aria-label="最小化">
              <svg width="18" height="18"><rect x="4" y="12" width="7" height="3" fill="#fff" /></svg>
            </CapButton>
            <CapButton aria-label="最大化">
              <svg width="18" height="18">
                <rect x="4.500" y="4.500" width="9" height="9" fill="none" stroke="#fff" />
                <path d="M4 5H14" stroke="#fff" strokeWidth="2.500" />
              </svg>
            </CapButton>
            <CapButton $close aria-label="关闭">
              <svg width="18" height="18"><path d="M4.500 4.500L13.500 13.500M13.500 4.500L4.500 13.500" stroke="#fff" strokeWidth="2.200" /></svg>
            </CapButton>
          </Caps>
        </TitleBar>

        <MenuBar>
          <MenuList>
            <MenuIcon><Pc /></MenuIcon>
            {["文件(&F)", "操作(&A)", "查看(&V)", "窗口(&W)", "帮助(&H)"].map((m) => (
              <span key={m}><Label text={m} /></span>
            ))}
          </MenuList>
          <ChildButtons>
            <ChildButton aria-label="最小化">
              <svg width="14" height="13"><rect x="3" y="9" width="7" height="2" fill="#000" /></svg>
            </ChildButton>
            <ChildButton aria-label="还原">
              <svg width="14" height="13">
                <path d="M5.500 5V2.500H10.500V7.500H9M5 3H11" fill="none" stroke="#000" />
                <path d="M2.500 5.500H8.500V10.500H2.500ZM2 6H9" fill="none" stroke="#000" />
              </svg>
            </ChildButton>
            <ChildButton $gap aria-label="关闭">
              <svg width="14" height="13"><path d="M3.500 2.500L10.500 9.500M10.500 2.500L3.500 9.500" stroke="#a5a291" strokeWidth="1.800" /></svg>
            </ChildButton>
          </ChildButtons>
        </MenuBar>

        <ToolBar>
          <ToolSlot $w={22}><BackArrow /></ToolSlot>
          <ToolSlot $w={23}><BackArrow off /></ToolSlot>
          <ToolRule $tight />
          <ToolSlot $w={23}><UpFolder /></ToolSlot>
          <ToolSlot $w={23} $on><PaneGlyph /></ToolSlot>
          <ToolRule $tight />
          <ToolSlot $w={23}><HelpGlyph /></ToolSlot>
          <ToolSlot $w={23}><PaneGlyph flip /></ToolSlot>
        </ToolBar>

        <Panes>
          <Pane $w={200}>
            <Tree items={consoleTree} indent={4} />
          </Pane>
          <Pane>
            <Tree items={deviceTree} indent={0} shift={-2} />
          </Pane>
        </Panes>
      </Window>

      <ContextMenu>
        {contextItems.map((text, i) =>
          text === null ? (
            <MenuRule key={i} />
          ) : (
            <MenuItem key={i} $bold={i === 0} $active={i === 3}>
              <Label text={text} />
            </MenuItem>
          ),
        )}
      </ContextMenu>

      <Marks />
    </Desktop>
  );
}
